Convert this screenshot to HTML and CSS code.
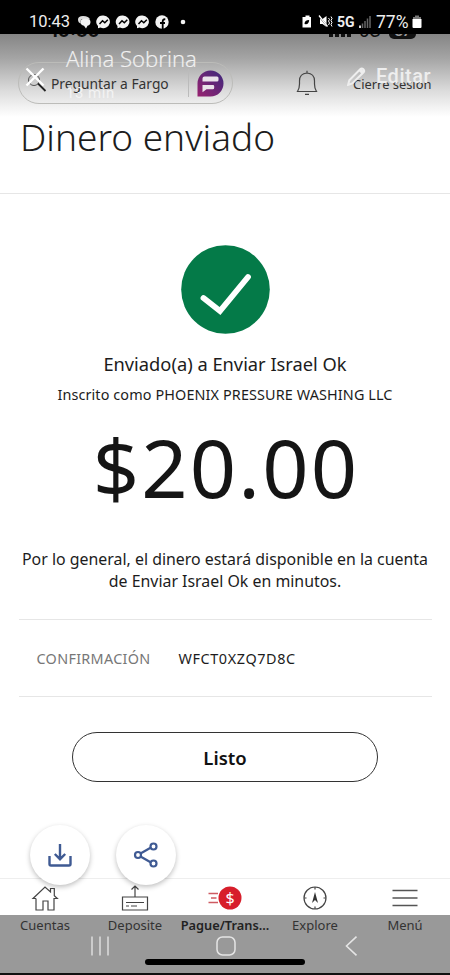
FILE: index.html
```
<!DOCTYPE html>
<html lang="es">
<head>
    <meta charset="utf-8">
    <title>Dinero enviado</title>
    <link rel="stylesheet" href="styles.css">
</head>
<body>
    <div class="phone">
        <!-- Barra de estado -->
        <div class="status-bar">
            <span class="clock">10:43</span>
            <svg class="notifications" width="110" height="16" viewBox="0 0 110 16">
                <path d="M1 5.500Q1 2 6 2q6 0 7 3.500H4Q3 8 4 9.500 1 9 1 5.500z" fill="#ddd"/>
                <path d="M3.500 8q0-3.500 5-3.500t5 3.500q0 3-3 3.800L9 14.500l-2-2.700Q3.500 11 3.500 8z" fill="#f3f3f3"/>
                <g fill="#f3f3f3">
                    <path id="msg" d="M26.500 1.500a6.600 6.300 0 1 1-3 12l-2.500.8v-2.300a6.600 6.300 0 0 1 5.500-10.500z"/>
                    <use href="#msg" x="19.500"/>
                    <use href="#msg" x="39"/>
                    <circle cx="85" cy="8" r="6.700"/>
                    <circle cx="106" cy="8" r="2.300"/>
                </g>
                <g fill="none" stroke="#000" stroke-width="1.500">
                    <path id="bolt" d="M22.500 10l3-3.200 2.300 2 3-3"/>
                    <use href="#bolt" x="19.500"/>
                    <use href="#bolt" x="39"/>
                    <path d="M85.700 15V7.500q0-2.500 2.600-2.200M83 9h5" stroke-width="1.800"/>
                </g>
            </svg>
            <svg class="device" width="31" height="16" viewBox="0 0 31 16">
                <path d="M3.500 1.500h4V3H9v10.500H.5V3h3z" fill="#fff"/>
                <path d="M2.500 10q0-4 4.700-4-.3 5-4.700 4z"/>
                <path d="M18 5h2.500l4-3v11l-4-3H18z" fill="#fff"/>
                <path d="M17 2l9 11" stroke="#000" stroke-width="1.500"/>
                <path d="M17 1.500l8.500 11" stroke="#fff" stroke-width="1.300"/>
                <path d="M26.500 4l1 1.500-1 1.500 1 2-1 2M29 2.500l1 2-1 2 1 2-1 2 1 2" fill="none" stroke="#fff"/>
            </svg>
            <span class="network">5G</span>
            <svg class="signal" width="12" height="13" viewBox="0 0 12 13">
                <path d="M1 13v-2.500" stroke="#fff" stroke-width="1.700"/>
                <path d="M3.500 13V8.500M6 13V6M8.500 13V3.500M11 13V1" stroke="#666" stroke-width="1.500"/>
            </svg>
            <span class="percent">77%</span>
            <svg class="battery" width="10" height="14" viewBox="0 0 10 14">
                <path d="M3 .5h4V2h2v4H1V2h2z" fill="#777"/>
                <path d="M.5 4h9v8q0 1-1 1h-7q-1 0-1-1z" fill="#fff"/>
            </svg>
        </div>

        <!-- Cabecera de la app -->
        <div class="app-header">
            <div class="search">
                <svg width="20" height="18" viewBox="0 0 20 18">
                    <circle cx="7" cy="6" r="5.500" fill="none" stroke="#555"/>
                    <path d="M11 9.500l7.500 7.500" stroke="#222" stroke-width="1.800"/>
                </svg>
                <span>Preguntar a Fargo</span>
                <svg class="fargo" width="27" height="27" viewBox="0 0 27 27">
                    <defs>
                        <linearGradient id="fargo" x1="1" y1="0" x2="0" y2="1">
                            <stop offset="0" stop-color="#3b287c"/>
                            <stop offset="1" stop-color="#982270"/>
                        </linearGradient>
                    </defs>
                    <path d="M.5 26.500V13.500a13 13 0 1 1 13 13z" fill="url(#fargo)"/>
                    <path d="M7.500 6.500H20q1.500 0 1.500 1.500v2q0 1.500-1.500 1.500H5.500v-3q0-2 2-2zM5.500 15h10.500q1.200 0 1.200 1.200v1.600q0 1.500-1.500 1.500H9.500l-4 3z" fill="#e9e2ea"/>
                </svg>
            </div>
            <svg class="bell" width="22" height="26" viewBox="0 0 22 26">
                <path d="M1.500 21.500q2-3 2-7.500V11q0-7.500 7.500-8 7.500.5 7.500 8v3q0 4.500 2 7.500zM11 3V.8M9 24.300h4" fill="none" stroke="#444" stroke-width="1.200"/>
            </svg>
            <span class="logout">Cierre sesión</span>

            <!-- Capa del visor sobre la captura -->
            <div class="viewer">
                <div class="cut-status">
                    <span>10:30</span>
                    <span class="cut-right"><i></i><i></i><i></i><i></i><b>5G</b><em>87</em></span>
                </div>
                <svg class="close" width="20" height="20" viewBox="0 0 20 20">
                    <path d="M1.500 1.500l17 17M18.500 1.500l-17 17" stroke="#fff" stroke-width="2.400"/>
                </svg>
                <span class="sender">Alina Sobrina</span>
                <span class="ago">13 min</span>
                <svg class="pencil" width="19" height="19" viewBox="0 0 18 18">
                    <path d="M1 17l1.200-4.500L12.500 2.200q1.500-1.500 3 0t0 3L5 15.500z" fill="none" stroke="#eee" stroke-width="1.900"/>
                    <path d="M11 3.500L14.500 7l2-2.500-3-3z" fill="#eee"/>
                </svg>
                <span class="edit">Editar</span>
            </div>
        </div>

        <h1>Dinero enviado</h1>

        <!-- Detalle del envío -->
        <div class="content">
            <svg class="check" width="89" height="89" viewBox="0 0 89 89">
                <circle cx="44.500" cy="44.500" r="44.300" fill="#047a48"/>
                <path d="M22.500 53L39 66 67 32" fill="none" stroke="#fff" stroke-width="5.800" stroke-linecap="round"/>
            </svg>
            <p class="sent">Enviado(a) a Enviar Israel Ok</p>
            <p class="enrolled">Inscrito como PHOENIX PRESSURE WASHING LLC</p>
            <p class="amount">$20.00</p>
            <p class="notice">Por lo general, el dinero estará disponible en la cuenta<br>de Enviar Israel Ok en minutos.</p>
            <div class="confirmation">
                <span class="label">CONFIRMACIÓN</span>
                <span class="code">WFCT0XZQ7D8C</span>
            </div>
            <button class="done">Listo</button>
        </div>

        <div class="bottom">
            <div class="floating">
                <button class="round">
                    <svg width="26" height="26" viewBox="0 0 26 26" fill="none" stroke="#3f5a93" stroke-width="2.400">
                        <path d="M2.500 14v8q0 1.500 1.500 1.500h18q1.500 0 1.500-1.500v-8M13 2v15M7.800 12l5.200 5.200 5.200-5.200"/>
                    </svg>
                </button>
                <button class="round">
                    <svg width="26" height="26" viewBox="0 0 26 26" fill="none" stroke="#3f5a93" stroke-width="2.200">
                        <path d="M7.500 11.500L18 5.500M7.500 14.500l10.500 6"/>
                        <circle cx="5" cy="13" r="3"/>
                        <circle cx="20.500" cy="4.500" r="3"/>
                        <circle cx="20.500" cy="21.500" r="3"/>
                    </svg>
                </button>
            </div>

            <!-- Menú inferior -->
            <div class="tabs">
                <div class="tab">
                    <svg width="28" height="28" viewBox="0 0 28 28" fill="none" stroke="#444" stroke-width="1.200">
                        <path d="M5 14.500H2L14 3l5.500 5V4.500h3.800v7.200l3 2.800H23V26h-6v-9h-5v9H5V14.500"/>
                    </svg>
                    <span>Cuentas</span>
                </div>
                <div class="tab">
                    <svg width="28" height="28" viewBox="0 0 28 28" fill="none" stroke="#444" stroke-width="1.200">
                        <path d="M1.500 13h25v13h-25zM14 13V2M10.500 5.500L14 2l3.500 3.500M5 18.500h18M5 22h3M10 22h6"/>
                    </svg>
                    <span>Deposite</span>
                </div>
                <div class="tab active">
                    <svg width="34" height="28" viewBox="0 0 34 28">
                        <path d="M.5 9.500h9.500M3 14h5.500M.5 18.500h9.500" stroke="#ce5b62" stroke-width="1.400"/>
                        <circle cx="22" cy="14" r="11.500" fill="#d71e2b"/>
                        <text x="22" y="19.500" text-anchor="middle" class="dollar">$</text>
                    </svg>
                    <span>Pague/Trans...</span>
                </div>
                <div class="tab">
                    <svg width="28" height="28" viewBox="0 0 28 28" fill="none" stroke="#444" stroke-width="1.200">
                        <circle cx="14" cy="14" r="11"/>
                        <path d="M14 3v2.500M14 22.500V25M3 14h2.500M22.500 14H25"/>
                        <path d="M14 8l3 11-3-3-3 3z" fill="#333" stroke="none"/>
                    </svg>
                    <span>Explore</span>
                </div>
                <div class="tab">
                    <svg width="28" height="28" viewBox="0 0 28 28">
                        <path d="M1.500 6.500h25M1.500 14h25M1.500 21.500h25" stroke="#555" stroke-width="1.300"/>
                    </svg>
                    <span>Menú</span>
                </div>
            </div>

            <!-- Botones del sistema -->
            <div class="system-nav">
                <svg width="20" height="20" viewBox="0 0 20 20"><path d="M2 .5v19M10 .5v19M18 .5v19" stroke="#ddd" stroke-width="1.500"/></svg>
                <svg width="20" height="20" viewBox="0 0 20 20"><rect x="1" y="1" width="18" height="18" rx="5.500" fill="none" stroke="#e5e5e5" stroke-width="1.500"/></svg>
                <svg width="20" height="20" viewBox="0 0 20 20"><path d="M14.500 .7L4.500 10l10 9.300" fill="none" stroke="#e5e5e5" stroke-width="1.600"/></svg>
            </div>
            <div class="home-indicator"></div>
        </div>
    </div>
</body>
</html>
```

FILE: styles.css
```
* {
    box-sizing: border-box;
}

body {
    margin: 0;
    background-color: #fff;
    color: #1c1c1c;
    font-family: "Noto Sans", sans-serif;
}

svg {
    display: block;
    flex-shrink: 0;
}

p, h1 {
    margin: 0;
    white-space: nowrap;
}

button {
    font-family: inherit;
    padding: 0;
}

.phone {
    width: 450px;
    height: 975px;
    display: flex;
    flex-direction: column;
    overflow: hidden;
}

/* Barra de estado */
.status-bar {
    height: 34px;
    flex-shrink: 0;
    display: flex;
    align-items: center;
    padding: 9px 0 0 29px;
    background-color: #000;
    color: #eee;
    font-family: Roboto, sans-serif;
}

.clock {
    width: 48px;
    font-size: 16.5px;
}

.device {
    margin-left: 115px;
}

.network {
    width: 19px;
    margin-left: 4px;
    font-size: 14px;
    font-weight: 700;
}

.signal {
    margin-left: 3px;
}

.percent {
    width: 34px;
    margin-left: 5px;
    font-size: 17.5px;
}

.battery {
    margin-left: 2px;
}

/* Cabecera */
.app-header {
    position: relative;
    height: 83px;
    flex-shrink: 0;
    display: flex;
    padding-top: 28px;
    background: linear-gradient(#858585 0, #a4a4a4 24px, #dcdcdc 57px, #f2f2f2 73px, #fff 83px);
}

.search {
    width: 215px;
    height: 42px;
    margin-left: 18px;
    display: flex;
    align-items: center;
    border: 1px solid #bcbcb9;
    border-radius: 21px;
    padding-left: 8px;
    font-size: 13.800px;
    color: #333;
}

.search span {
    width: 138px;
    height: 28px;
    margin-left: 4px;
    padding-top: 1px;
    line-height: 28px;
    border-right: 1px solid #bbb;
    white-space: nowrap;
}

.fargo {
    margin-left: 8px;
}

.bell {
    margin: 8px 0 0 63px;
}

.logout {
    margin: 12px 0 0 35px;
    font-size: 12.900px;
    line-height: 20px;
    color: #333;
    white-space: nowrap;
}

/* Elementos del visor encima de la captura */
.viewer > * {
    position: absolute;
    white-space: nowrap;
}

.cut-status {
    top: 0;
    left: 50px;
    width: 366px;
    height: 5px;
    display: flex;
    justify-content: space-between;
    overflow: hidden;
    color: #111;
    font: 700 18px/18px Inter, sans-serif;
}

.cut-status > span {
    margin-top: -12px;
}

.cut-right {
    display: flex;
}

.cut-right i {
    width: 4px;
    height: 15px;
    margin-right: 2px;
    background-color: #111;
}

.cut-right b {
    margin: 0 8px 0 6px;
    font-weight: 500;
    font-size: 16px;
}

.cut-right em {
    width: 27px;
    height: 17px;
    border-radius: 5px;
    background-color: #111;
    color: #999;
    font-size: 13px;
    font-style: normal;
    text-align: center;
}

.close {
    top: 33px;
    left: 25px;
}

.sender {
    top: 11px;
    left: 66px;
    font: 300 22.200px/28px "Open Sans", sans-serif;
    color: #f1f1f1;
    -webkit-text-stroke: .2px #f1f1f1;
}

.ago {
    top: 50px;
    left: 66px;
    font: 15px/18px Roboto, sans-serif;
    letter-spacing: .5px;
    color: #f3f3f3;
}

.pencil {
    top: 33px;
    left: 347px;
}

.edit {
    top: 30px;
    left: 376px;
    font: 500 20px/24px Roboto, sans-serif;
    letter-spacing: .5px;
    color: #eee;
}

h1 {
    height: 77px;
    flex-shrink: 0;
    padding-left: 20px;
    border-bottom: 1px solid #e6e6e6;
    font-size: 37px;
    line-height: 40px;
    font-weight: 300;
}

/* Contenido */
.content {
    flex: 1;
    min-height: 0;
    display: flex;
    flex-direction: column;
    align-items: center;
    padding-top: 51px;
}

.sent {
    margin-top: 17px;
    font-size: 18.300px;
    line-height: 26px;
}

.enrolled {
    margin-top: 8px;
    font-size: 14.400px;
    letter-spacing: .120px;
    line-height: 20px;
}

.amount {
    margin-top: 17px;
    padding-left: 2px;
    font-size: 81px;
    line-height: 90px;
    letter-spacing: 2.200px;
    color: #151515;
}

.notice {
    margin-top: 36px;
    font-size: 15.900px;
    line-height: 22px;
    text-align: center;
}

.confirmation {
    width: 413px;
    height: 78px;
    flex-shrink: 0;
    margin-top: 27px;
    display: flex;
    align-items: center;
    border-top: 1px solid #e6e6e6;
    border-bottom: 1px solid #e6e6e6;
    padding-left: 18px;
    font-size: 14.400px;
}

.label {
    width: 142px;
    letter-spacing: .3px;
    color: #777;
}

.code {
    letter-spacing: .6px;
}

.done {
    width: 306px;
    height: 50px;
    flex-shrink: 0;
    margin-top: 35px;
    border: 1.5px solid #333;
    border-radius: 25px;
    background-color: #fff;
    color: #111;
    font-size: 18.500px;
    font-weight: 600;
}

/* Zona inferior */
.bottom {
    position: relative;
    height: 97px;
    flex-shrink: 0;
    border-top: 1px solid #eee;
    border-bottom: 2px solid #111;
    background: linear-gradient(#fff 36px, #999 36px);
}

.floating {
    position: absolute;
    top: -54px;
    left: 30px;
    display: flex;
    gap: 26px;
}

.round {
    width: 60px;
    height: 60px;
    display: flex;
    align-items: center;
    justify-content: center;
    border: none;
    border-radius: 50%;
    background-color: #fff;
    box-shadow: 0 2px 5px rgba(0, 0, 0, .25);
}

.tabs {
    display: flex;
    height: 57px;
    padding-top: 5px;
}

.tab {
    width: 90px;
    display: flex;
    flex-direction: column;
    align-items: center;
    font-size: 13px;
    line-height: 18px;
    color: #333;
    white-space: nowrap;
}

.tab span {
    margin-top: 4px;
}

.active {
    font-size: 12.800px;
    font-weight: 600;
    color: #222;
}

.dollar {
    fill: #fff;
    font-size: 16px;
    font-weight: 400;
}

.system-nav {
    display: flex;
    justify-content: space-between;
    padding: 0 88px 0 90px;
}

.home-indicator {
    width: 160px;
    height: 6px;
    margin: 3px auto 0;
    border-radius: 3px;
    background-color: #000;
}
```
